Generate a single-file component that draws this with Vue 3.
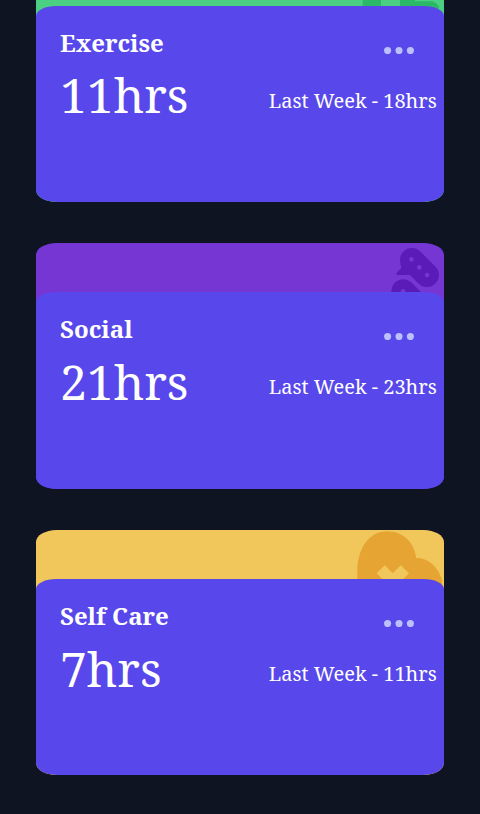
<script setup>
const cards = [
  { id: 'exercise', title: 'Exercise', now: 11, last: 18 },
  { id: 'social', title: 'Social', now: 21, last: 23 },
  { id: 'self-care', title: 'Self Care', now: 7, last: 11 },
]
</script>

<template>
  <main class="board">
    <article v-for="card in cards" :key="card.id" class="card" :class="card.id">
      <svg v-if="card.id === 'exercise'" class="art" width="88" height="60" viewBox="0 0 88 60">
        <path fill="#2bb967" d="M6.7 20H25V60H6.7zM44 20H59V44.2H75Q80 44.5 82.8 49.5V60H44z" />
      </svg>
      <svg v-else-if="card.id === 'social'" class="art" width="88" height="60" viewBox="0 0 88 60">
        <path fill="#5a1bb8" d="M47.4 8.4A12 12 0 0 1 64.2 8.4L79.4 23.5A12 12 0 0 1 62.4 40.5L54 31.9H41.4Q39.6 31.4 40.9 29.6L45.5 25Q41.8 14.5 47.4 8.4z" />
        <path fill="#5a1bb8" d="M35.4 60V48A12 12 0 0 1 55.5 39.5L74 58V60z" />
        <g fill="#7536d3">
          <circle cx="55.4" cy="16.4" r="2.3" />
          <circle cx="63.3" cy="24.4" r="2.3" />
          <circle cx="71.1" cy="32.1" r="2.3" />
          <circle cx="47" cy="48.4" r="2.3" />
        </g>
      </svg>
      <svg v-else class="art" width="88" height="60" viewBox="0 0 88 60">
        <path fill="#e6a532" d="M1.3 60V42C1.3 17 14 1.2 31.2 1.2C46.5 1.2 58.5 12 60.2 28C72 28 82 36 86 50V60z" />
        <path fill="#f1c75b" d="M20.7 43.3L28.7 35.3L36.7 43.3L44.7 35.3L53 43.3L36.7 59.5z" />
      </svg>
      <section class="panel">
        <header class="row">
          <h2>{{ card.title }}</h2>
          <svg class="more" width="30" height="7.14" viewBox="0 0 21 5">
            <circle cx="2.5" cy="2.5" r="2.5" />
            <circle cx="10.5" cy="2.5" r="2.5" />
            <circle cx="18.5" cy="2.5" r="2.5" />
          </svg>
        </header>
        <div class="row stats">
          <span class="hours">{{ card.now }}hrs</span>
          <span class="last">Last Week - {{ card.last }}hrs</span>
        </div>
      </section>
    </article>
  </main>
</template>

<style>
body {
  background: #0e1422;
}
</style>

<style scoped>
.board {
  height: 814px;
  box-sizing: border-box;
  overflow: hidden;
  padding: 0 36px;
  display: flex;
  flex-direction: column;
  justify-content: flex-end;
  gap: 41px;
  padding-bottom: 38.6px;
  background: #0e1422;
  color: #fff;
  font-family: "Noto Serif", "Droid Serif", serif;
}
.card {
  position: relative;
  flex: none;
  height: 245.6px;
  box-sizing: border-box;
  padding-top: 49.1px;
  border-radius: 5%;
  overflow: hidden;
}
.exercise { background: #4bcf82; }
.social { background: #7536d3; }
.self-care { background: #f1c75b; }
.art {
  position: absolute;
  top: 0;
  right: 0;
}
.panel {
  position: relative;
  height: 196.5px;
  box-sizing: border-box;
  padding: 20px 7.3px 0 24px;
  border-radius: 5%;
  background: #5847eb;
}
.row {
  display: flex;
  justify-content: space-between;
  align-items: center;
}
h2 {
  margin: 0;
  font-size: 24px;
  line-height: 34px;
  font-weight: 700;
}
.more {
  margin: 15px 22.7px 0 0;
  fill: #bbc0ff;
}
.stats {
  height: 70px;
}
.hours {
  padding-top: 1.3px;
  font-size: 48px;
  line-height: 70px;
}
.last {
  padding-top: 12px;
  font-size: 20px;
  line-height: 28px;
}
</style>
